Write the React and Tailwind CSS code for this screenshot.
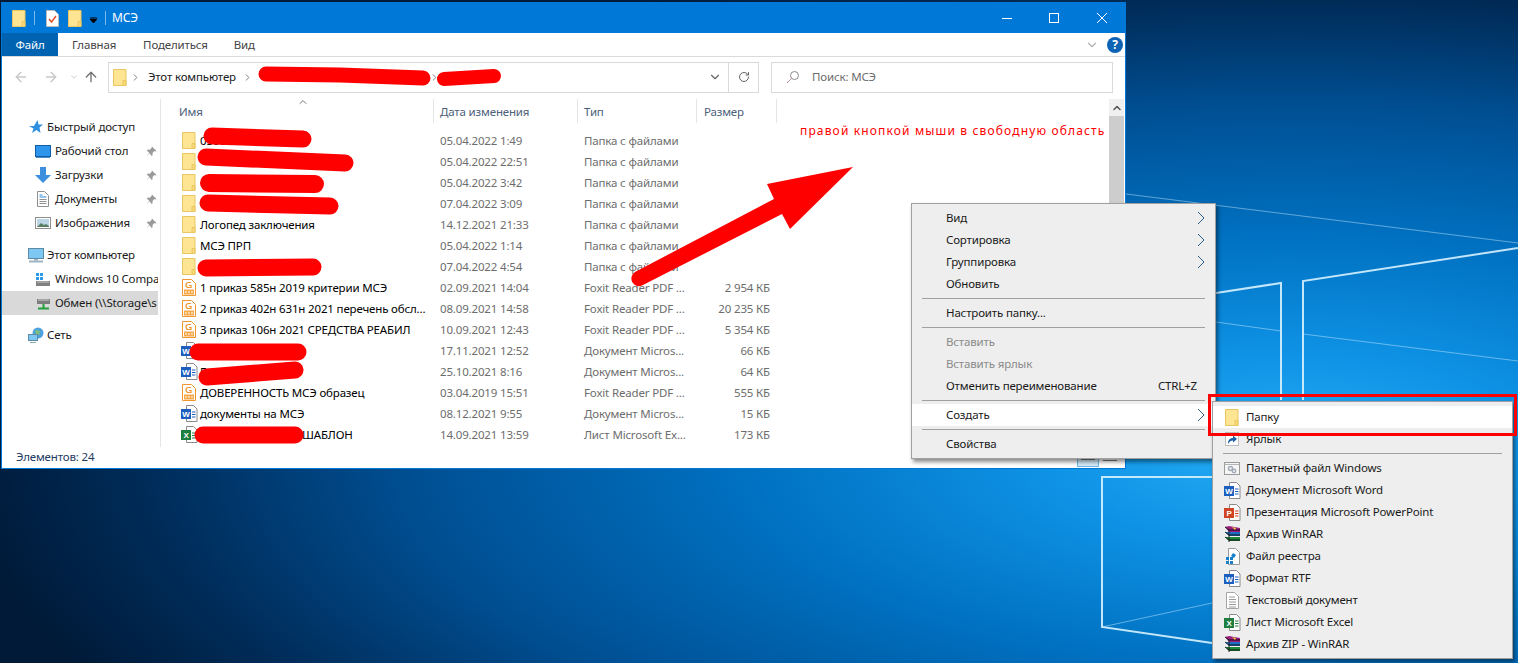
import React from 'react';
import { ArrowLeft, ArrowRight, ArrowUp, ChevronDown, ChevronRight, ChevronUp, RotateCw } from 'lucide-react';

function FolderIcon({ className = '' }) {
  return (
    <svg width="14" height="17" viewBox="0 0 14 17" className={className}>
      <path d="M.5.5h12.5v16H.5z" fill="#fde593" stroke="#e9c661" />
      <path d="M10 11.500h3v5h-3z" fill="#f9d977" stroke="#e9c661" />
    </svg>
  );
}

function PdfIcon() {
  return (
    <svg width="14" height="17" viewBox="0 0 14 17">
      <path d="M.5.5h9l4 4v12H.5z" fill="#fff" stroke="#f0962e" />
      <path d="M9 3.500H6.500a2 2 0 0 0 0 5H9V6.500H7" fill="none" stroke="#f0962e" strokeWidth="1.2" />
      <path d="M2 10.500h10v5H2z" fill="#f7a94a" />
      <path d="M3 13h8" stroke="#fff" strokeDasharray="2 1" />
    </svg>
  );
}

function DocBadge({ color, letter, lines = true }) {
  return (
    <svg width="17" height="17" viewBox="0 0 17 17">
      <path d="M5.500.5h7l3.500 3.500v12.500H5.500z" fill="#fff" stroke="#8a8a8a" />
      {lines && <path d="M11 7h3.500M11 9.500h3.500M11 12h3.500" stroke={color} />}
      <rect x="0" y="4" width="10" height="10" fill={color} />
      <text x="5" y="12" textAnchor="middle" fontSize="8" fontWeight="700" fill="#fff" fontFamily="Liberation Sans, sans-serif">{letter}</text>
    </svg>
  );
}

function RarIcon() {
  return (
    <svg width="17" height="16" viewBox="0 0 17 16">
      <path d="M1 1l4-1 11 2v4H5z" fill="#9c1f7f" />
      <path d="M1 6l4 0h11v4H5z" fill="#1d6fc4" />
      <path d="M1 11h4l11 0v4H5z" fill="#1f8a3c" />
      <path d="M1 1l4 3v12M1 6l4 3M1 11l4 3" stroke="#222" fill="none" />
      <path d="M5 4h11M5 9h11M5 14h11" stroke="#111" />
      <path d="M8 1l4 1-1 2z" fill="#f4d23c" />
    </svg>
  );
}

function RegIcon() {
  return (
    <svg width="15" height="17" viewBox="0 0 15 17">
      <path d="M3.500.5h7l4 4v12h-11z" fill="#fff" stroke="#9a9a9a" />
      <path d="M1 9h3v3H1zM5 9h3v3H5zM1 13h3v3H1zM5 13h3v3H5zM8 5l3 2-2 3-3-2z" fill="#1a7fc9" />
    </svg>
  );
}

function TextIcon() {
  return (
    <svg width="13" height="17" viewBox="0 0 13 17">
      <path d="M.5.5h8l4 4v12H.5z" fill="#fff" stroke="#a5a5a5" />
      <path d="M3 5h6M3 7.500h7M3 10h7M3 12.500h7M3 15h7" stroke="#9a9a9a" />
    </svg>
  );
}

function BatIcon() {
  return (
    <svg width="16" height="13" viewBox="0 0 16 13">
      <rect x=".5" y=".5" width="15" height="12" fill="#f5f5f5" stroke="#9a9a9a" />
      <path d="M.5 2.500h15" stroke="#b5b5b5" />
      <circle cx="6.500" cy="6.500" r="2" fill="none" stroke="#9fa8b5" strokeWidth="1.5" />
      <circle cx="10" cy="9" r="1.700" fill="none" stroke="#9fa8b5" strokeWidth="1.4" />
    </svg>
  );
}

function ShortcutIcon() {
  return (
    <svg width="14" height="14" viewBox="0 0 14 14">
      <rect x=".5" y=".5" width="13" height="13" fill="#fff" stroke="#bdbdbd" />
      <path d="M3 12c0-4 2-6 5-6V3.500L12 7l-4 3.500V8.500c-2 0-3.500 1-5 3.500z" fill="#1c5fa8" />
    </svg>
  );
}

function Pin() {
  return (
    <svg width="11" height="11" viewBox="0 0 11 11">
      <path d="M6 .5l4.500 4.500-1 .5-1-.5-2 2 .2 2-1 1-2.200-2.700L1 10l2.200-3.300L.8 4.500l1-1 2 .2 2-2-.3-.7z" fill="#9b9b9b" />
    </svg>
  );
}

const StarIcon = () => (
  <svg width="14" height="14" viewBox="0 0 14 14">
    <path d="M8.500 0l1 4.500H14L10.500 7.500l1 5.500-4-3-4.500 3 1.500-4.500L0 6l5 0z" fill="#2f8fe0" />
  </svg>
);
const DesktopIcon = () => (
  <svg width="16" height="13" viewBox="0 0 16 13">
    <rect x=".5" y=".5" width="15" height="11" fill="#2d95ec" stroke="#0f5fa8" />
    <path d="M1 12.500h14" stroke="#4c8bc4" />
  </svg>
);
const DownloadIcon = () => (
  <svg width="16" height="16" viewBox="0 0 16 16">
    <path d="M5 0h6v8h5l-8 8-8-8h5z" fill="#3b8fdc" />
  </svg>
);
const DocsIcon = () => (
  <svg width="12" height="16" viewBox="0 0 12 16">
    <path d="M.5.5h7l4 4v11H.5z" fill="#fff" stroke="#8e8e8e" />
    <path d="M2.500 4h3M2.500 6h7" stroke="#2c86d6" />
    <path d="M2.500 8.500h7M2.500 10.500h7M2.500 12.500h7" stroke="#8e8e8e" />
  </svg>
);
const PicturesIcon = () => (
  <svg width="16" height="12" viewBox="0 0 16 12">
    <rect x=".5" y=".5" width="15" height="11" fill="#fff" stroke="#8e8e8e" />
    <rect x="2" y="2" width="12" height="8" fill="#bcd6e6" />
    <path d="M2 10l4-4 3 2 2-1 3 2v1z" fill="#5a7f63" />
  </svg>
);
const ComputerIcon = () => (
  <svg width="16" height="15" viewBox="0 0 16 15">
    <rect x=".5" y=".5" width="15" height="10" fill="#7cc8f2" stroke="#5e8aa6" />
    <path d="M6 11h4v1.500H6z" fill="#9fb4c2" />
    <path d="M1 13.500h14" stroke="#9fb4c2" strokeWidth="2" />
  </svg>
);
const DriveIcon = () => (
  <svg width="16" height="13" viewBox="0 0 16 13">
    <path d="M1 0h3v3H1zM5 0h3v3H5zM1 4h3v3H1zM5 4h3v3H5z" fill="#2b9be8" />
    <path d="M1 8h14v5H1z" fill="#808080" />
    <path d="M2 9h12" stroke="#c8c8c8" />
  </svg>
);
const NetDriveIcon = () => (
  <svg width="15" height="14" viewBox="0 0 15 14">
    <path d="M1 3h13v5H1z" fill="#7d7d7d" />
    <path d="M2 4h11" stroke="#cfcfcf" />
    <path d="M7.500 8v4M2 12.500h11" stroke="#23a03c" strokeWidth="2" />
  </svg>
);
const NetworkIcon = () => (
  <svg width="16" height="16" viewBox="0 0 16 16">
    <circle cx="10" cy="6" r="5.500" fill="#4fa3dc" />
    <path d="M7 3l5 1-1 4-3-1z" fill="#7fbf7a" />
    <rect x=".5" y="7.500" width="9" height="6" fill="#7cc8f2" stroke="#5e8aa6" />
    <path d="M2 15.500h6" stroke="#8aa" />
  </svg>
);

const folderType = 'Папка с файлами';
const pdfType = 'Foxit Reader PDF ...';
const wordType = 'Документ Micros...';

const files = [
  { icon: <FolderIcon />, name: '03066', date: '05.04.2022 1:49', type: folderType },
  { icon: <FolderIcon />, name: '', date: '05.04.2022 22:51', type: folderType },
  { icon: <FolderIcon />, name: '', date: '05.04.2022 3:42', type: folderType },
  { icon: <FolderIcon />, name: '', date: '07.04.2022 3:09', type: folderType },
  { icon: <FolderIcon />, name: 'Логопед заключения', date: '14.12.2021 21:33', type: folderType },
  { icon: <FolderIcon />, name: 'МСЭ ПРП', date: '05.04.2022 1:14', type: folderType },
  { icon: <FolderIcon />, name: '', date: '07.04.2022 4:54', type: folderType },
  { icon: <PdfIcon />, name: '1 приказ 585н 2019 критерии МСЭ', date: '02.09.2021 14:04', type: pdfType, size: '2 954 КБ' },
  { icon: <PdfIcon />, name: '2 приказ 402н 631н 2021 перечень обсл...', date: '08.09.2021 14:58', type: pdfType, size: '20 235 КБ' },
  { icon: <PdfIcon />, name: '3 приказ 106н 2021 СРЕДСТВА РЕАБИЛ', date: '10.09.2021 12:43', type: pdfType, size: '5 354 КБ' },
  { icon: <DocBadge color="#1d5fbf" letter="W" />, name: '', date: '17.11.2021 12:52', type: wordType, size: '66 КБ' },
  { icon: <DocBadge color="#1d5fbf" letter="W" />, name: 'Б', date: '25.10.2021 8:16', type: wordType, size: '64 КБ' },
  { icon: <PdfIcon />, name: 'ДОВЕРЕННОСТЬ МСЭ образец', date: '03.04.2019 15:51', type: pdfType, size: '555 КБ' },
  { icon: <DocBadge color="#1d5fbf" letter="W" />, name: 'документы на МСЭ', date: '08.12.2021 9:55', type: wordType, size: '15 КБ' },
  { icon: <DocBadge color="#1e7e3e" letter="X" />, name: 'ШАБЛОН', pad: 'pl-[102px]', date: '14.09.2021 13:59', type: 'Лист Microsoft Ex...', size: '173 КБ' },
];

const navTree = [
  { icon: <StarIcon />, label: 'Быстрый доступ', top: true, first: true },
  { icon: <DesktopIcon />, label: 'Рабочий стол', pin: true },
  { icon: <DownloadIcon />, label: 'Загрузки', pin: true },
  { icon: <DocsIcon />, label: 'Документы', pin: true },
  { icon: <PicturesIcon />, label: 'Изображения', pin: true },
  { icon: <ComputerIcon />, label: 'Этот компьютер', top: true },
  { icon: <DriveIcon />, label: 'Windows 10 Compa' },
  { icon: <NetDriveIcon />, label: 'Обмен (\\\\Storage\\s', selected: true },
  { icon: <NetworkIcon />, label: 'Сеть', top: true },
];

const newItems = [
  { icon: <BatIcon />, label: 'Пакетный файл Windows' },
  { icon: <DocBadge color="#1d5fbf" letter="W" />, label: 'Документ Microsoft Word' },
  { icon: <DocBadge color="#d04423" letter="P" />, label: 'Презентация Microsoft PowerPoint' },
  { icon: <RarIcon />, label: 'Архив WinRAR' },
  { icon: <RegIcon />, label: 'Файл реестра' },
  { icon: <DocBadge color="#1d5fbf" letter="W" />, label: 'Формат RTF' },
  { icon: <TextIcon />, label: 'Текстовый документ' },
  { icon: <DocBadge color="#1e7e3e" letter="X" />, label: 'Лист Microsoft Excel' },
  { icon: <RarIcon />, label: 'Архив ZIP - WinRAR' },
];

function MenuArrow() {
  return (
    <svg width="8" height="14" viewBox="0 0 8 14" className="shrink-0">
      <path d="M1 1l6 6-6 6" fill="none" stroke="#2b5c8c" strokeWidth="1" />
    </svg>
  );
}

function MenuItem({ label, arrow, disabled, active, hint }) {
  return (
    <div className={`flex h-[22px] items-center pl-[34px] pr-[10px] ${active ? 'bg-white' : ''} ${disabled ? 'text-[#8a8a8a]' : 'text-[#1a1a1a]'}`}>
      <span className="flex-1">{label}</span>
      {hint && <span className="mr-[8px]">{hint}</span>}
      {arrow && <MenuArrow />}
    </div>
  );
}

function MenuSep({ className = '' }) {
  return (
    <div className={`flex h-[7px] items-center ${className}`}>
      <div className="h-px w-full bg-[#a0a0a0]" />
    </div>
  );
}

export default function App() {
  return (
    <div className="relative h-[663px] w-[1518px] overflow-hidden bg-[radial-gradient(ellipse_1330px_520px_at_1290px_450px,#27aef6_0%,#0f93e6_18%,#0070c0_42%,#004f93_66%,#002c59_86%,#001a38_100%)] font-['Noto_Sans',sans-serif] text-[11.5px] leading-none tracking-[-0.16px]">
      {/* wallpaper */}
      <svg width="1518" height="663" className="absolute inset-0">
        <g stroke="#d8f2ff" fill="none">
          <path d="M1126 194L1518 243M1216 322L1281 331M1303 334L1518 361M1102 627L1212 603" strokeOpacity=".45" />
          <path d="M1216 293L1281 283V400M1303 400V281L1518 248M1212 477H1102V627L1212 643" strokeWidth="2" strokeOpacity=".9" />
        </g>
      </svg>

      {/* explorer window */}
      <div className="absolute left-px top-[2px] flex h-[467px] w-[1125px] flex-col border border-[#0078d7] bg-white">
        <div className="flex h-[30px] shrink-0 items-center bg-[#0078d7] pl-[10px] text-white">
          <FolderIcon />
          <div className="ml-[8px] h-[14px] w-px bg-[#7db8e8]" />
          <svg width="13" height="17" viewBox="0 0 13 17" className="ml-[11px]">
            <path d="M.5.5h8l4 4v12H.5z" fill="#fff" stroke="#bbb" />
            <path d="M3 9l2.500 3L10 6" fill="none" stroke="#e0512b" strokeWidth="1.500" />
          </svg>
          <FolderIcon className="ml-[9px]" />
          <svg width="8" height="7" viewBox="0 0 8 7" className="ml-[8px] mt-[4px]">
            <path d="M0 0h7M0 2l3.500 4L7 2z" stroke="#000" fill="#000" />
          </svg>
          <div className="ml-[7px] h-[14px] w-px bg-[#7db8e8]" />
          <span className="ml-[6px] text-[12px]">МСЭ</span>
          <div className="ml-auto flex items-center">
            <svg width="12" height="12" viewBox="0 0 12 12" className="mr-[35px]"><path d="M1 6.500h10" stroke="#fff" /></svg>
            <svg width="12" height="12" viewBox="0 0 12 12" className="mr-[36px]"><rect x="1.500" y="1.500" width="9" height="9" fill="none" stroke="#fff" /></svg>
            <svg width="12" height="12" viewBox="0 0 12 12" className="mr-[17px]"><path d="M1 1l10 10M11 1L1 11" stroke="#fff" /></svg>
          </div>
        </div>

        <div className="flex h-[24px] shrink-0 items-stretch border-b border-[#dadada] text-[#444]">
          <div className="flex w-[56px] items-center justify-center bg-[#0063b1] text-white">Файл</div>
          <div className="ml-[14px] flex items-center">Главная</div>
          <div className="ml-[27px] flex items-center">Поделиться</div>
          <div className="ml-[26px] flex items-center">Вид</div>
          <div className="ml-auto flex items-center pr-[2px]">
            <ChevronDown size={14} className="mr-[8px] text-[#b0b0b0]" />
            <div className="flex h-[16px] w-[16px] items-center justify-center rounded-full bg-[#0e63b4] text-[12px] font-bold text-white">?</div>
          </div>
        </div>

        <div className="flex h-[42px] shrink-0 items-center pb-[2px]">
          <div className="flex w-[106px] items-center pl-[11px]">
            <ArrowLeft size={16} className="text-[#c8c8c8]" />
            <ArrowRight size={16} className="ml-[14px] text-[#c8c8c8]" />
            <ChevronDown size={10} className="ml-[10px] text-[#c8c8c8]" />
            <ArrowUp size={16} className="ml-[4px] text-[#707070]" />
          </div>
          <div className="flex h-[31px] w-[651px] items-center border border-[#d9d9d9] pl-[4px] text-[#1a1a1a]">
            <FolderIcon />
            <ChevronRight size={11} className="ml-[3px] text-[#777]" />
            <span className="ml-[7px]">Этот компьютер</span>
            <ChevronRight size={11} className="ml-[6px] text-[#777]" />
            <ChevronRight size={11} className="ml-[176px] text-[#777]" />
            <ChevronDown size={14} className="ml-auto mr-[6px] text-[#666]" />
            <div className="flex h-full w-[30px] items-center justify-center border-l border-[#d9d9d9]">
              <RotateCw size={12} className="text-[#666]" />
            </div>
          </div>
          <div className="ml-[12px] flex h-[31px] w-[342px] items-center border border-[#d9d9d9] pl-[14px] text-[#6d6d6d]">
            <svg width="14" height="14" viewBox="0 0 14 14">
              <circle cx="8.500" cy="5.500" r="4" fill="none" stroke="#8a8a8a" />
              <path d="M5.500 8.500L1 13" stroke="#b98aa0" />
            </svg>
            <span className="ml-[12px]">Поиск: МСЭ</span>
          </div>
        </div>

        <div className="flex h-[348px] shrink-0">
          <div className="w-[156px] shrink-0 overflow-hidden pt-[16px] text-[#1a1a1a]">
            {navTree.map((item) => (
              <div
                key={item.label}
                className={`flex h-[24px] items-center whitespace-nowrap ${item.top ? 'pl-[24px]' : 'pl-[31px]'} ${item.top && !item.first ? 'mt-[8px]' : ''} ${item.selected ? 'bg-[#d9d9d9]' : ''}`}
              >
                <div className="flex w-[20px] shrink-0 justify-center">{item.icon}</div>
                <span className={`flex-1 ${item.top ? 'pl-[1px]' : 'pl-[2px]'}`}>{item.label}</span>
                {item.pin && <span className="mr-[1px]"><Pin /></span>}
              </div>
            ))}
          </div>

          <div className="relative ml-[2px] min-w-0 flex-1 border-l border-[#e5e5e5]">
            <div className="ml-[12px] flex h-[24px] text-[#4c607a]">
              <div className="relative flex w-[261px] items-center border-r border-[#e5e5e5] pl-[6px] pt-[2px]">
                Имя
                <ChevronUp size={12} className="absolute left-[124px] top-[-3px] text-[#777]" />
              </div>
              <div className="flex w-[144px] items-center border-r border-[#e5e5e5] pl-[6px] pt-[2px]">Дата изменения</div>
              <div className="flex w-[119px] items-center border-r border-[#e5e5e5] pl-[6px] pt-[2px]">Тип</div>
              <div className="flex w-[80px] items-center border-r border-[#e5e5e5] pl-[7px] pt-[2px]">Размер</div>
            </div>
            <div className="pl-[19px] pt-[7px]">
              {files.map((file) => (
                <div key={file.date} className="flex h-[21px] items-center whitespace-nowrap">
                  <div className="flex w-[260px] items-center">
                    <div className="mr-[2px] flex w-[18px] shrink-0 justify-center">{file.icon}</div>
                    <span className={`text-black ${file.pad || ''}`}>{file.name}</span>
                  </div>
                  <div className="w-[144px] text-[#6d6d6d]">{file.date}</div>
                  <div className="w-[120px] text-[#6d6d6d]">{file.type}</div>
                  <div className="w-[66px] text-right text-[#6d6d6d]">{file.size}</div>
                </div>
              ))}
            </div>
            <p className="absolute left-[639px] top-[26px] whitespace-nowrap text-[12px] tracking-[1.15px] text-[#ff0000]">правой кнопкой мыши в свободную область</p>
          </div>

          <div className="mr-px flex w-[15px] shrink-0 flex-col bg-[#f0f0f0]">
            <div className="flex h-[17px] items-center justify-center">
              <ChevronUp size={12} strokeWidth={3} className="text-[#555]" />
            </div>
            <div className="flex-1 bg-[#cdcdcd]" />
          </div>
        </div>

        <div className="flex flex-1 items-start">
          <span className="pl-[14px] pt-[4px] text-[#1e3a5f]">Элементов: 24</span>
          <div className="ml-auto mr-[4px] flex h-[20px]">
            <div className="flex w-[22px] items-end justify-center border border-[#6db9e8] bg-[#d5ebf8] pb-[6px]">
              <div className="h-[2px] w-[14px] bg-[#777]" />
            </div>
            <div className="flex w-[22px] items-end justify-center pb-[6px]">
              <div className="h-px w-[14px] bg-[#777]" />
            </div>
          </div>
        </div>
      </div>

      {/* context menu */}
      <div className="absolute left-[911px] top-[203px] w-[305px] border border-[#a0a0a0] bg-[#eeeeee] py-[3px] shadow-[2px_3px_4px_rgba(0,0,0,0.45)]">
        <MenuItem label="Вид" arrow />
        <MenuItem label="Сортировка" arrow />
        <MenuItem label="Группировка" arrow />
        <MenuItem label="Обновить" />
        <MenuSep className="px-[10px]" />
        <MenuItem label="Настроить папку..." />
        <MenuSep className="px-[10px]" />
        <MenuItem label="Вставить" disabled />
        <MenuItem label="Вставить ярлык" disabled />
        <MenuItem label="Отменить переименование" hint="CTRL+Z" />
        <MenuSep className="px-[10px]" />
        <MenuItem label="Создать" arrow active />
        <MenuSep className="px-[10px]" />
        <MenuItem label="Свойства" />
      </div>

      {/* submenu Создать */}
      <div className="absolute left-[1212px] top-[401px] w-[301px] border border-[#a0a0a0] bg-[#eeeeee] pb-[3px] pt-[4px] text-[#1a1a1a] shadow-[2px_3px_4px_rgba(0,0,0,0.45)]">
        <div className="flex h-[22px] items-center bg-white pl-[9px]">
          <div className="flex w-[20px] justify-center"><FolderIcon /></div>
          <span className="ml-[4px]">Папку</span>
        </div>
        <div className="flex h-[22px] items-center pl-[9px]">
          <div className="flex w-[20px] justify-center"><ShortcutIcon /></div>
          <span className="ml-[4px]">Ярлык</span>
        </div>
        <MenuSep className="pl-[10px] pr-[10px]" />
        {newItems.map((item) => (
          <div key={item.label} className="flex h-[22px] items-center pl-[9px]">
            <div className="flex w-[20px] justify-center">{item.icon}</div>
            <span className="ml-[4px]">{item.label}</span>
          </div>
        ))}
      </div>

      {/* red marker annotations */}
      <div className="absolute left-[1208px] top-[394px] h-[42px] w-[309px] border-[3px] border-[#ff0000]" />
      <svg width="1518" height="663" className="pointer-events-none absolute inset-0">
        <g stroke="#ff0000" fill="none" strokeLinecap="round" strokeWidth="17">
          <path d="M266 74L340 75L423 78" strokeWidth="15" />
          <path d="M444 79L494 76" strokeWidth="14" />
          <path d="M212 136L303 139" />
          <path d="M206 157L345 163" />
          <path d="M209 183L315 184" strokeWidth="18" />
          <path d="M208 203L330 206" />
          <path d="M206 268L313 267" />
          <path d="M198 352L298 352" />
          <path d="M207 377L295 370" />
          <path d="M203 435L295 435" />
        </g>
        <path d="M635 272L774 199L767 184L853 167L790 229L782 214L643 285A7.500 7.500 0 0 1 635 272Z" fill="#ff0000" />
      </svg>
    </div>
  );
}
